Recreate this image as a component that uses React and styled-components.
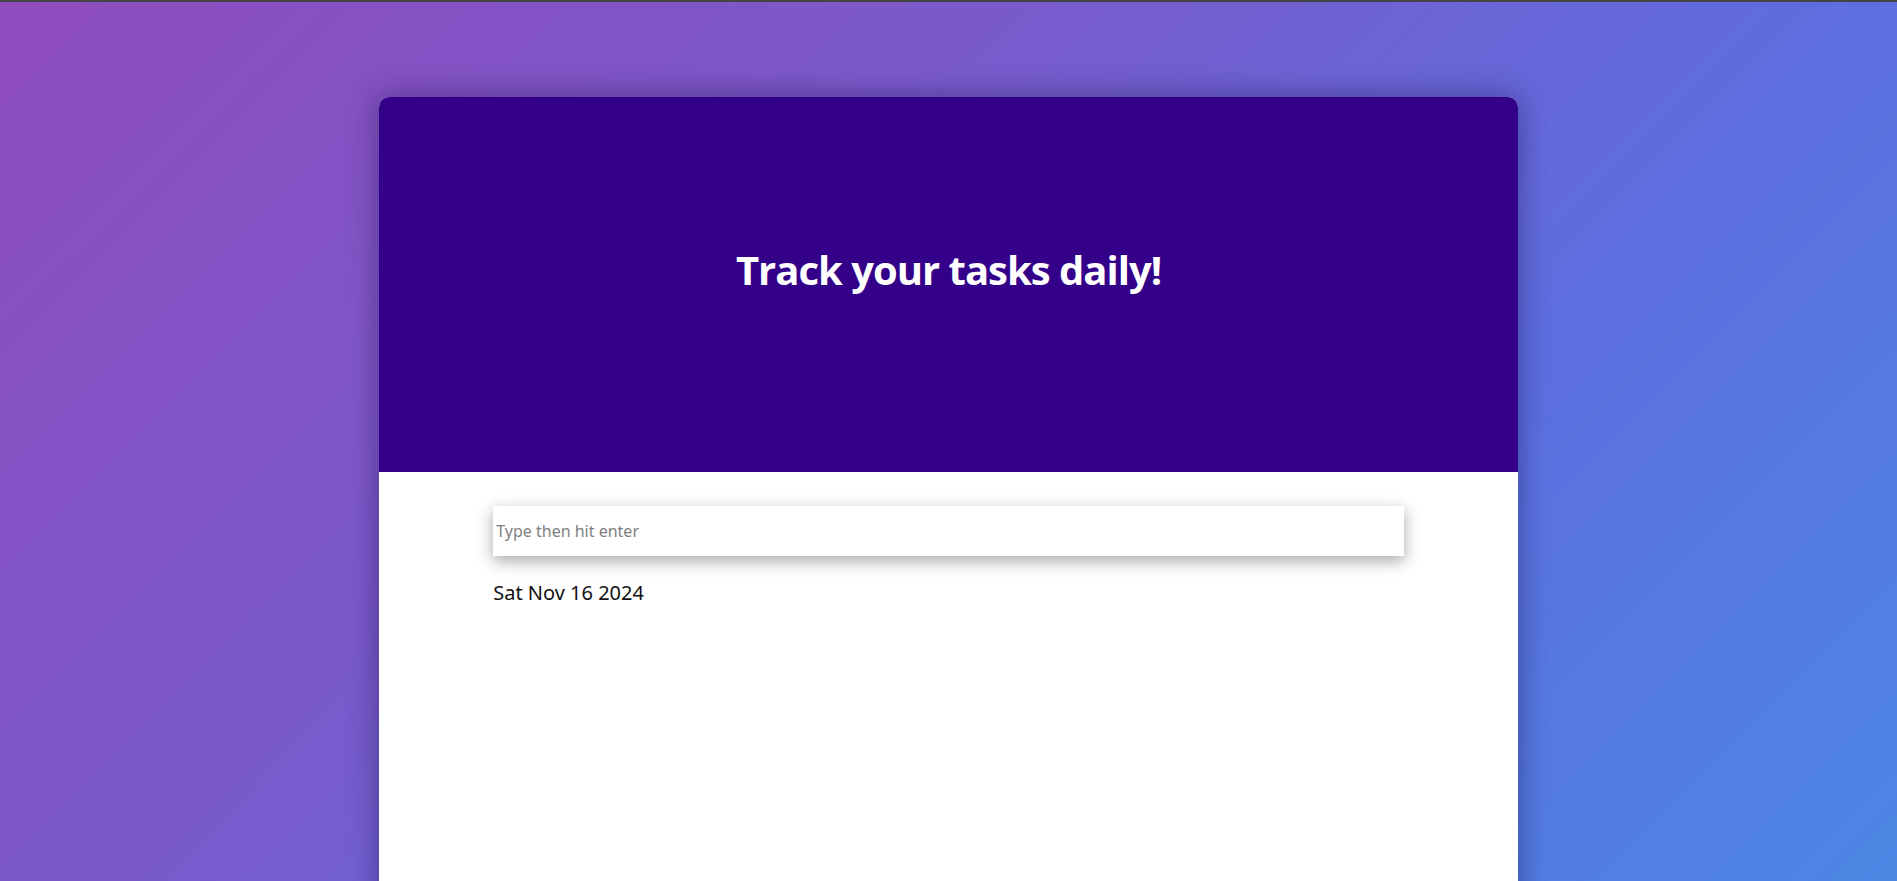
import React from "react";
import styled, { createGlobalStyle } from "styled-components";

const GlobalStyle = createGlobalStyle`
  html, body { margin: 0; padding: 0; }
  body {
    font-family: "Noto Sans", "Open Sans", sans-serif;
    overflow: hidden;
  }
`;

const Page = styled.div`
  min-height: 100vh;
  box-sizing: border-box;
  border-top: 2px solid #444;
  background: linear-gradient(135deg, #8f4cbf 0%, #7a5acb 35%, #5d6ee0 65%, #4a8ae4 100%);
  padding-top: 95px;
  display: flex;
  justify-content: center;
`;

const Card = styled.main`
  width: 60%;
  min-height: 900px;
  background: #fff;
  border-radius: 10px 10px 0 0;
  box-shadow: 0 0 30px rgba(20, 10, 60, 0.45);
  overflow: hidden;
  display: flex;
  flex-direction: column;
`;

const Header = styled.header`
  height: 375px;
  background: #340089;
  display: flex;
  justify-content: center;
  padding-top: 147px;
  box-sizing: border-box;
`;

const Title = styled.h1`
  margin: 0;
  color: #fff;
  font-family: "Open Sans", sans-serif;
  font-weight: 700;
  font-size: 40px;
  letter-spacing: -1px;
  line-height: 1.3;
`;

const Body = styled.section`
  width: 80%;
  margin: 0 auto;
  padding-top: 34px;
  display: flex;
  flex-direction: column;
`;

const TaskInput = styled.input`
  height: 50px;
  box-sizing: border-box;
  border: none;
  outline: none;
  padding: 0 3px;
  font-family: "Noto Sans", sans-serif;
  font-size: 16px;
  background: #fff;
  box-shadow: 0 5px 15px rgba(0, 0, 0, 0.35);
  &::placeholder { color: #808080; }
`;

const DateLine = styled.p`
  margin: 23px 0 0;
  font-family: "Noto Sans", sans-serif;
  font-size: 20px;
  color: #111;
`;

export default function App() {
  return (
    <>
      <GlobalStyle />
      <Page>
        <Card>
          <Header>
            <Title>Track your tasks daily!</Title>
          </Header>
          <Body>
            <TaskInput placeholder="Type then hit enter" />
            <DateLine>Sat Nov 16 2024</DateLine>
          </Body>
        </Card>
      </Page>
    </>
  );
}
